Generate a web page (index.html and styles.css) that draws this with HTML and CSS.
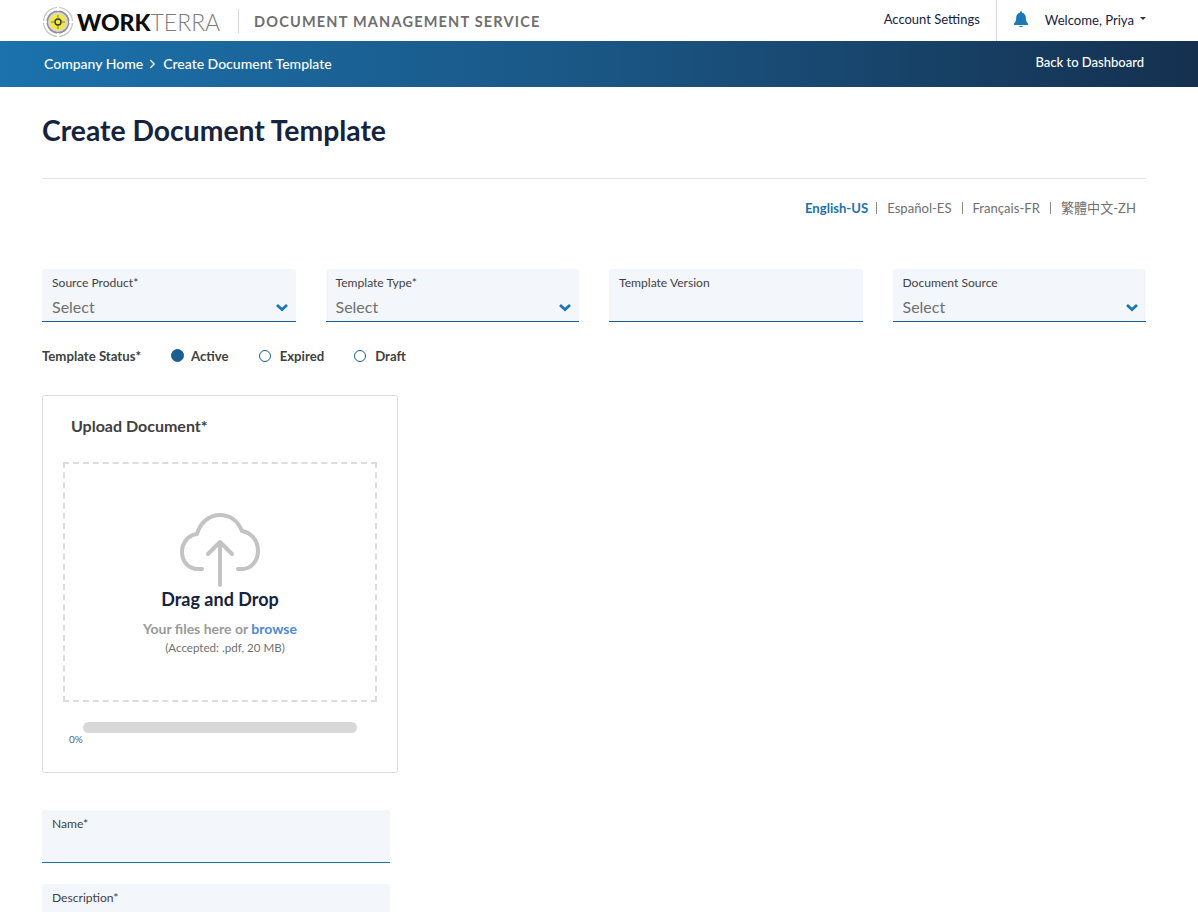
FILE: index.html
```html
<!DOCTYPE html>
<html lang="en">
<head>
<meta charset="utf-8">
<title>Create Document Template</title>
<link rel="stylesheet" href="styles.css">
</head>
<body>
<header class="topbar">
  <div class="brand">
    <svg class="logo" width="32" height="32" viewBox="0 0 32 32" aria-hidden="true">
      <circle cx="16" cy="16" r="14.500" fill="none" stroke="#c4c4c4" stroke-width="1.200"/>
      <circle cx="16" cy="16" r="11.500" fill="#8f8f8f"/>
      <circle cx="16" cy="16" r="10" fill="#d9d9d9"/>
      <circle cx="16" cy="16" r="8" fill="#f2e93a"/>
      <circle cx="16" cy="16" r="3" fill="none" stroke="#333" stroke-width="1.400"/>
      <path d="M9 16h4M19 16h4M16 9v4M16 19v4" stroke="#777" stroke-width="1"/>
      <path d="M16 0v5M16 27v5M0 16h5M27 16h5" stroke="#fff" stroke-width="2"/>
    </svg>
    <span class="wordmark"><b>WORK</b>TERRA</span>
    <span class="brand-sep"></span>
    <span class="service">DOCUMENT MANAGEMENT SERVICE</span>
  </div>
  <nav class="usernav">
    <a class="account">Account Settings</a>
    <div class="user">
      <svg class="bell" width="16" height="16" viewBox="0 0 16 16" aria-hidden="true">
        <path fill="#1b78b5" d="M8 0.2c-.6 0-1 .4-1 1v.6C4.700 2.300 3.200 4.200 3.200 6.500c0 3.500-1 4.700-2 5.700-.3.300-.4.600-.4.900 0 .5.400 1 1 1h12.400c.6 0 1-.5 1-1 0-.3-.1-.6-.4-.9-1-1-2-2.200-2-5.700 0-2.300-1.500-4.200-3.800-4.700v-.6c0-.6-.4-1-1-1zM6.200 14.900c0 .9.800 1.100 1.800 1.100s1.800-.2 1.800-1.100z"/>
      </svg>
      <span class="welcome">Welcome, Priya</span>
      <span class="caret"></span>
    </div>
  </nav>
</header>

<div class="crumbbar">
  <div class="crumbs">
    <span>Company Home</span>
    <svg class="crumb-arrow" width="7" height="10" viewBox="0 0 7 10" aria-hidden="true"><path d="M1.200 1l4 4-4 4" fill="none" stroke="#fff" stroke-width="1.300"/></svg>
    <span>Create Document Template</span>
  </div>
  <a class="back">Back to Dashboard</a>
</div>

<main class="page">
  <h1 class="title">Create Document Template</h1>
  <div class="langs">
    <a class="lang active">English-US</a>
    <a class="lang">Español-ES</a>
    <a class="lang">Français-FR</a>
    <a class="lang">繁體中文-ZH</a>
  </div>

  <div class="fields">
    <div class="field">
      <label class="field-label">Source Product*</label>
      <div class="field-value">Select</div>
      <svg class="chev" width="14" height="9" viewBox="0 0 14 9" aria-hidden="true"><path d="M2 2l5 4.500L12 2" fill="none" stroke="#1b78b5" stroke-width="2.800"/></svg>
    </div>
    <div class="field">
      <label class="field-label">Template Type*</label>
      <div class="field-value">Select</div>
      <svg class="chev" width="14" height="9" viewBox="0 0 14 9" aria-hidden="true"><path d="M2 2l5 4.500L12 2" fill="none" stroke="#1b78b5" stroke-width="2.800"/></svg>
    </div>
    <div class="field">
      <label class="field-label">Template Version</label>
      <div class="field-value"></div>
    </div>
    <div class="field">
      <label class="field-label">Document Source</label>
      <div class="field-value">Select</div>
      <svg class="chev" width="14" height="9" viewBox="0 0 14 9" aria-hidden="true"><path d="M2 2l5 4.500L12 2" fill="none" stroke="#1b78b5" stroke-width="2.800"/></svg>
    </div>
  </div>

  <div class="status">
    <span class="status-label">Template Status*</span>
    <span class="radio on"></span><span class="radio-text">Active</span>
    <span class="radio"></span><span class="radio-text">Expired</span>
    <span class="radio"></span><span class="radio-text">Draft</span>
  </div>

  <section class="upload">
    <h2 class="upload-title">Upload Document*</h2>
    <div class="drop">
      <svg class="cloud" width="82" height="76" viewBox="0 0 82 76" aria-hidden="true">
        <path d="M22 57H18C8 57 2 49 2 40 2 30 9 23 17 22 20 11 29 3 40 3 50 3 58 9 62 19 72 21 78 29 78 39 78 49 71 57 62 57H58" fill="none" stroke="#c3c3c3" stroke-width="4" stroke-linecap="round" stroke-linejoin="round"/>
        <path d="M40 73V30M28 42l12-12 12 12" fill="none" stroke="#c3c3c3" stroke-width="4" stroke-linecap="round" stroke-linejoin="round"/>
      </svg>
      <div class="drag">Drag and Drop</div>
      <div class="hint">Your files here or <a class="browse">browse</a></div>
      <div class="accepted">(Accepted: .pdf, 20 MB)</div>
    </div>
    <div class="progress"></div>
    <div class="percent">0%</div>
  </section>

  <div class="field wide name">
    <label class="field-label">Name*</label>
    <div class="field-value"></div>
  </div>
  <div class="field wide desc">
    <label class="field-label">Description*</label>
  </div>
</main>
</body>
</html>
```
FILE: styles.css
```css
* { box-sizing: border-box; }
html, body { margin: 0; padding: 0; height: 912px; overflow: hidden; background: #fff; }
body { font-family: Lato, "Noto Sans CJK TC", sans-serif; color: #16233f; }

.topbar { height: 41px; display: flex; justify-content: space-between; padding: 0 52px 0 42px; }
.brand { display: flex; align-items: center; }
.logo { margin-right: 3px; margin-top: 2px; }
.wordmark { font-size: 23px; font-weight: 300; color: #7d7d7d; width: 161px; margin-top: 2px; white-space: nowrap; }
.wordmark b { color: #0d0d0d; font-weight: 900; }
.brand-sep { width: 1px; height: 24px; background: #d5d5d5; margin: 0 15px 0 0; }
.service { font-size: 14.500px; font-weight: 700; color: #6f6f6f; letter-spacing: 1.200px; margin-top: 2px; }
.usernav { display: flex; }
.account { font-size: 13px; line-height: 39px; color: #16233f; padding-right: 16px; border-right: 1px solid #d5d5d5; }
.user { display: flex; align-items: center; padding-left: 16px; height: 39px; }
.bell { margin-right: 16px; margin-top: -1px; }
.welcome { font-size: 13.100px; color: #16233f; }
.caret { width: 0; height: 0; border: 3px solid transparent; border-top: 3.500px solid #333; border-bottom: 0; margin-left: 6px; margin-top: -2px; }

.crumbbar { height: 46px; background: linear-gradient(90deg, #1b72ad 0%, #1a5684 50%, #15304f 100%); display: flex; justify-content: space-between; padding: 0 54px 0 44px; color: #fff; font-size: 14px; font-weight: 500; }
.crumbs { display: flex; align-items: center; height: 45px; }
.crumb-arrow { margin: 0 7px 0 6px; }
.back { line-height: 42px; font-size: 13px; }

.page { padding: 0 52px 0 42px; }
.title { margin: 0; padding: 25px 0 0; font-size: 28.300px; line-height: 36px; font-weight: 700; color: #16233f; border-bottom: 1px solid #e3e3e3; height: 92px; }
.langs { display: flex; justify-content: flex-end; padding: 20px 10px 0 0; height: 90px; font-size: 13.100px; color: #6f6f6f; }
.lang { padding: 0 10px; border-left: 1px solid #8a8a8a; height: 12px; line-height: 12px; margin-top: 3px; white-space: nowrap; }
.lang:last-child { padding-right: 0; }
.lang.active { border-left: 0; font-weight: 700; color: #1b72ad; padding-right: 8px; }

.fields { display: grid; grid-template-columns: repeat(4, 1fr); gap: 30px; }
.field { position: relative; height: 53px; background: #f3f6fa; border-bottom: 1px solid #1a5f8f; border-radius: 3px 3px 0 0; padding: 7px 10px 0; }
.field-label { display: block; font-size: 12.100px; line-height: 14px; color: #3f3f46; }
.field-value { font-size: 16px; line-height: 20px; margin-top: 7px; color: #707070; }
.chev { position: absolute; right: 7px; bottom: 9px; }

.status { display: flex; align-items: center; height: 17px; margin-top: 25px; font-size: 13.200px; font-weight: 700; color: #404040; }
.status-label { width: 129px; white-space: nowrap; }
.radio { width: 12px; height: 12px; border: 1px solid #1a5f8f; border-radius: 50%; margin-right: 9px; }
.radio.on { background: #1a5f8f; width: 13px; height: 13px; margin-right: 7px; }
.radio-text { margin-right: 30px; }

.upload { width: 356px; height: 378px; margin-top: 31px; border: 1px solid #dcdcdc; border-radius: 3px; padding: 20px 20px 0; }
.upload-title { margin: 0 0 0 8px; font-size: 16px; line-height: 20px; font-weight: 700; color: #404040; }
.drop { height: 240px; margin-top: 26px; border: 2px dashed #dcdcdc; display: flex; flex-direction: column; align-items: center; padding-top: 48px; }
.cloud { display: block; margin-left: 2px; }
.drag { font-size: 18px; line-height: 24px; font-weight: 700; color: #16233f; margin-top: -1px; }
.hint { font-size: 14px; line-height: 18px; font-weight: 700; color: #9a9a9a; margin-top: 9px; }
.browse { color: #4a8ad9; }
.accepted { font-size: 11.600px; line-height: 14px; color: #6f6f6f; margin-top: 3px; margin-left: 10px; }
.progress { width: 274px; height: 11px; background: #d8d8d8; border-radius: 6px; margin: 20px 0 0 20px; }
.percent { font-size: 10px; line-height: 12px; color: #4d6b85; margin: 0 0 0 6px; }

.field.wide { width: 348px; }
.field.name { margin-top: 37px; border-bottom-color: #1b72ad; }
.field.desc { margin-top: 21px; height: 80px; border-bottom: 0; }
```
